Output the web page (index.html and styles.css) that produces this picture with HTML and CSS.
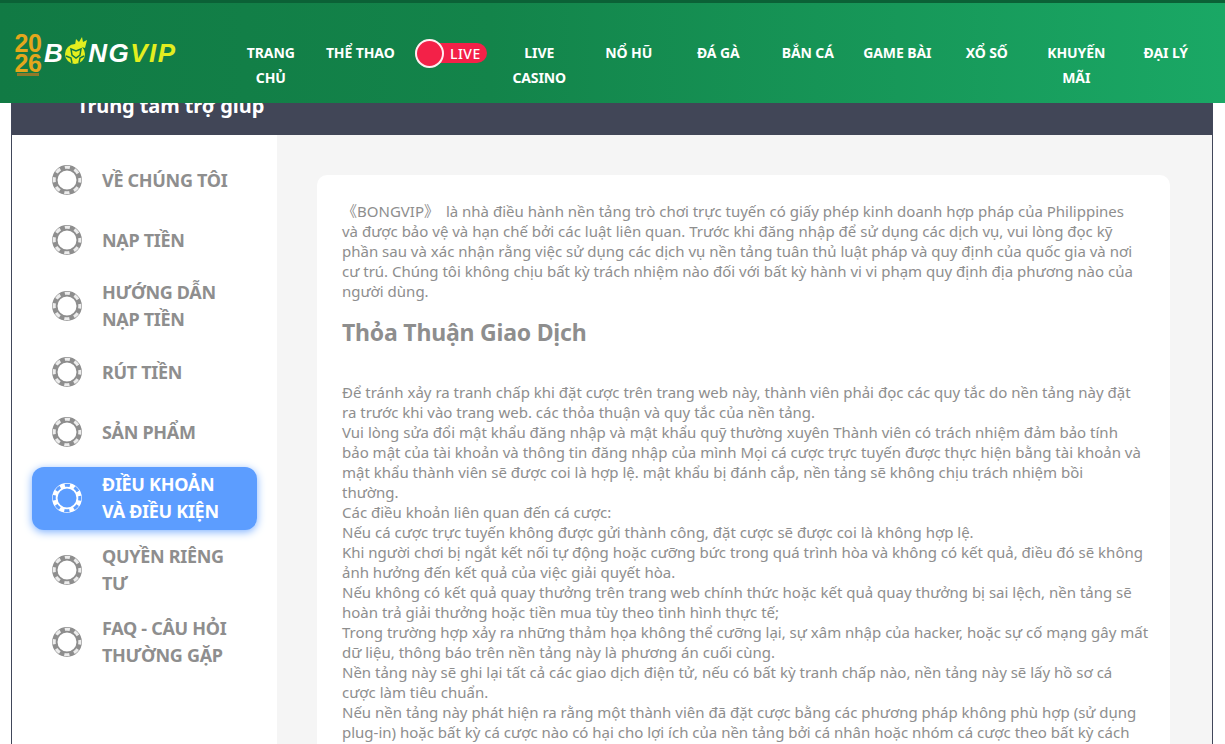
FILE: index.html
```html
<!DOCTYPE html>
<html lang="vi">
<head>
    <meta charset="UTF-8">
    <meta name="viewport" content="width=device-width, initial-scale=1.0">
    <title>Trung tâm trợ giúp - BONGVIP</title>
    <link rel="stylesheet" href="styles.css">
</head>
<body>
    <svg class="icon-defs" width="0" height="0">
        <symbol id="chip" viewBox="0 0 30 30">
            <circle cx="15" cy="15" r="12.2" fill="none" stroke="currentColor" stroke-width="5.4"/>
            <circle class="chip-slots" cx="15" cy="15" r="12.8" fill="none" stroke-width="3" stroke-dasharray="5.2 4.85" stroke-dashoffset="2.6"/>
        </symbol>
    </svg>

    <header class="topbar">
        <div class="logo">
            <div class="logo-year">20<br>26<div class="logo-base"></div></div>
            <div class="logo-name"><span>B</span><svg class="logo-ball" viewBox="0 0 24 27"><circle cx="11" cy="17" r="10" fill="#e3ee1f"/><path d="M11 8l1-6 3 3 3-5 1 5 4-2-2 8z" fill="#e3ee1f"/><path d="M7 12l5 2 5-2-1 6-4 3-4-3zM2 19l5 2 1 5M20 19l-4 2-1 5" fill="none" stroke="#127a43" stroke-width="1.5"/></svg><span>NG</span><span class="logo-vip">VIP</span></div>
        </div>
        <nav class="nav">
            <a class="nav-item">TRANG<br>CHỦ</a>
            <a class="nav-item">THỂ THAO</a>
            <a class="nav-item live-item"><span class="live-badge"><span class="live-dot"></span><span class="live-text">LIVE</span></span></a>
            <a class="nav-item">LIVE<br>CASINO</a>
            <a class="nav-item">NỔ HŨ</a>
            <a class="nav-item">ĐÁ GÀ</a>
            <a class="nav-item">BẮN CÁ</a>
            <a class="nav-item">GAME BÀI</a>
            <a class="nav-item">XỔ SỐ</a>
            <a class="nav-item">KHUYẾN<br>MÃI</a>
            <a class="nav-item">ĐẠI LÝ</a>
        </nav>
    </header>

    <div class="help-page">
        <div class="help-title"><h1>Trung tâm trợ giúp</h1></div>
        <div class="help-body">
            <aside class="side-menu">
                <a class="side-item"><svg class="chip"><use href="#chip"/></svg><span>VỀ CHÚNG TÔI</span></a>
                <a class="side-item"><svg class="chip"><use href="#chip"/></svg><span>NẠP TIỀN</span></a>
                <a class="side-item two-line"><svg class="chip"><use href="#chip"/></svg><span>HƯỚNG DẪN<br>NẠP TIỀN</span></a>
                <a class="side-item"><svg class="chip"><use href="#chip"/></svg><span>RÚT TIỀN</span></a>
                <a class="side-item"><svg class="chip"><use href="#chip"/></svg><span>SẢN PHẨM</span></a>
                <a class="side-item active"><svg class="chip"><use href="#chip"/></svg><span>ĐIỀU KHOẢN<br>VÀ ĐIỀU KIỆN</span></a>
                <a class="side-item two-line"><svg class="chip"><use href="#chip"/></svg><span>QUYỀN RIÊNG<br>TƯ</span></a>
                <a class="side-item two-line"><svg class="chip"><use href="#chip"/></svg><span>FAQ - CÂU HỎI<br>THƯỜNG GẶP</span></a>
            </aside>
            <main class="content">
                <article class="card">
                    <p><span class="cjk">《</span>BONGVIP<span class="cjk close">》</span> là nhà điều hành nền tảng trò chơi trực tuyến có giấy phép kinh doanh hợp pháp của Philippines<br>và được bảo vệ và hạn chế bởi các luật liên quan. Trước khi đăng nhập để sử dụng các dịch vụ, vui lòng đọc kỹ<br>phần sau và xác nhận rằng việc sử dụng các dịch vụ nền tảng tuân thủ luật pháp và quy định của quốc gia và nơi<br>cư trú. Chúng tôi không chịu bất kỳ trách nhiệm nào đối với bất kỳ hành vi vi phạm quy định địa phương nào của<br>người dùng.</p>
                    <h2>Thỏa Thuận Giao Dịch</h2>
                    <p>Để tránh xảy ra tranh chấp khi đặt cược trên trang web này, thành viên phải đọc các quy tắc do nền tảng này đặt<br>ra trước khi vào trang web. các thỏa thuận và quy tắc của nền tảng.<br>
                    Vui lòng sửa đổi mật khẩu đăng nhập và mật khẩu quỹ thường xuyên Thành viên có trách nhiệm đảm bảo tính<br>bảo mật của tài khoản và thông tin đăng nhập của mình Mọi cá cược trực tuyến được thực hiện bằng tài khoản và<br>mật khẩu thành viên sẽ được coi là hợp lệ. mật khẩu bị đánh cắp, nền tảng sẽ không chịu trách nhiệm bồi<br>thường.<br>
                    Các điều khoản liên quan đến cá cược:<br>
                    Nếu cá cược trực tuyến không được gửi thành công, đặt cược sẽ được coi là không hợp lệ.<br>
                    Khi người chơi bị ngắt kết nối tự động hoặc cưỡng bức trong quá trình hòa và không có kết quả, điều đó sẽ không<br>ảnh hưởng đến kết quả của việc giải quyết hòa.<br>
                    Nếu không có kết quả quay thưởng trên trang web chính thức hoặc kết quả quay thưởng bị sai lệch, nền tảng sẽ<br>hoàn trả giải thưởng hoặc tiền mua tùy theo tình hình thực tế;<br>
                    Trong trường hợp xảy ra những thảm họa không thể cưỡng lại, sự xâm nhập của hacker, hoặc sự cố mạng gây mất<br>dữ liệu, thông báo trên nền tảng này là phương án cuối cùng.<br>
                    Nền tảng này sẽ ghi lại tất cả các giao dịch điện tử, nếu có bất kỳ tranh chấp nào, nền tảng này sẽ lấy hồ sơ cá<br>cược làm tiêu chuẩn.<br>
                    Nếu nền tảng này phát hiện ra rằng một thành viên đã đặt cược bằng các phương pháp không phù hợp (sử dụng<br>plug-in) hoặc bất kỳ cá cược nào có hại cho lợi ích của nền tảng bởi cá nhân hoặc nhóm cá cược theo bất kỳ cách</p>
                </article>
            </main>
        </div>
    </div>
</body>
</html>
```

FILE: styles.css
```css
body {
    margin: 0;
    height: 744px;
    overflow: hidden;
    background-color: #fff;
    color: #8e8e8e;
    font-family: 'Noto Sans', 'Noto Sans CJK SC', sans-serif;
}
.icon-defs {
    position: absolute;
}
.topbar {
    position: relative;
    z-index: 2;
    display: flex;
    height: 100px;
    border-top: 3px solid #0b6136;
    background: linear-gradient(90deg, #117a44 0%, #13844a 40%, #1aa865 100%);
}
.logo {
    display: flex;
    align-items: center;
    flex: none;
    box-sizing: border-box;
    width: 226px;
    padding-left: 14px;
}
.logo-year {
    width: 28px;
    margin-top: 2px;
    color: #e3a71c;
    font-family: 'Liberation Sans', sans-serif;
    font-size: 25px;
    font-weight: bold;
    line-height: 20px;
    letter-spacing: -0.5px;
    text-align: center;
}
.logo-base {
    width: 22px;
    height: 3px;
    margin: 0 auto;
    background-color: #8f7a2a;
}
.logo-name {
    display: flex;
    align-items: center;
    margin-left: 2px;
    color: #fff;
    font-family: 'Liberation Sans', sans-serif;
    font-size: 26px;
    font-style: italic;
    font-weight: bold;
    letter-spacing: 1.5px;
}
.logo-ball {
    width: 24px;
    height: 27px;
    margin-top: -5px;
}
.logo-vip {
    color: #e3ee1f;
}
.nav {
    display: flex;
    flex: 1;
    align-items: flex-start;
    padding-top: 37px;
}
.nav-item {
    flex: none;
    width: 89.5px;
    color: #fff;
    font-size: 14px;
    font-weight: 700;
    letter-spacing: -0.1px;
    line-height: 25px;
    text-align: center;
    white-space: nowrap;
}
.live-item {
    display: flex;
    justify-content: center;
}
.live-badge {
    display: flex;
    align-items: center;
    justify-content: space-between;
    box-sizing: border-box;
    width: 72px;
    height: 20px;
    margin: 3px 0 0 2px;
    padding-right: 6px;
    border-radius: 10px;
    background-color: #f32148;
}
.live-dot {
    box-sizing: border-box;
    width: 29px;
    height: 29px;
    border: 2px solid #ffeef1;
    border-radius: 50%;
    background-color: #f32148;
}
.live-text {
    color: #fff;
    font-size: 14px;
    font-weight: 500;
    letter-spacing: 0.5px;
}
.help-page {
    box-sizing: border-box;
    width: 1202px;
    margin-left: 11px;
    border-left: 1px solid #41475a;
    border-right: 1px solid #41475a;
}
.help-title {
    height: 32px;
    background-color: #414657;
}
.help-title h1 {
    margin: 0;
    padding-left: 65px;
    color: #fff;
    font-size: 20px;
    font-weight: 700;
    letter-spacing: -0.1px;
    line-height: 6px;
}
.help-body {
    display: flex;
    height: 609px;
}
.side-menu {
    display: flex;
    flex-direction: column;
    flex: none;
    box-sizing: border-box;
    width: 265px;
    padding: 15px 20px 0;
    background-color: #fff;
}
.side-item {
    --chip-slot: #ececec;
    display: flex;
    align-items: center;
    gap: 20px;
    box-sizing: border-box;
    min-height: 60px;
    padding-left: 20px;
    color: #8e8e8e;
    font-size: 18px;
    font-weight: 700;
    letter-spacing: -0.3px;
    line-height: 27px;
}
.side-item.two-line {
    min-height: 70px;
    margin: 1px 0;
}
.side-item.active {
    --chip-slot: #5c9dff;
    min-height: 63px;
    margin: 5px 0 4px;
    padding-bottom: 2px;
    border-radius: 12px;
    background-color: #5c9dff;
    box-shadow: 0 2px 8px #7fb2ff;
    color: #fff;
}
.chip {
    flex: none;
    width: 30px;
    height: 30px;
}
.chip-slots {
    stroke: var(--chip-slot);
}
.content {
    flex: 1;
    overflow: hidden;
    padding: 40px 42px 0 40px;
    background-color: #f5f5f5;
}
.card {
    padding: 26px 25px;
    border-radius: 10px;
    background-color: #fff;
    font-size: 15px;
    line-height: 20px;
}
.card p {
    margin: 0;
    white-space: nowrap;
}
.cjk {
    font-family: 'Noto Sans CJK SC', sans-serif;
    line-height: 1;
}
.cjk.close {
    margin-right: 3px;
}
.card h2 {
    margin: 16px 0 35px;
    color: #8e8e8e;
    font-size: 23px;
    font-weight: 700;
    letter-spacing: -0.2px;
    line-height: 30px;
}
```
